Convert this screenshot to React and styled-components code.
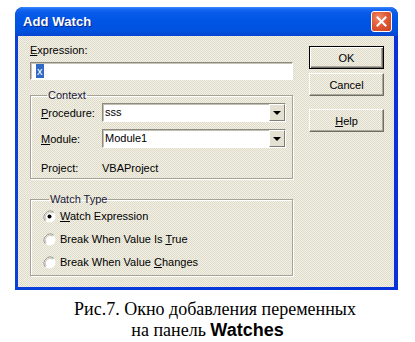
import React from "react";
import styled, { createGlobalStyle } from "styled-components";

const GlobalStyle = createGlobalStyle`
  html, body { margin: 0; padding: 0; background: #fff; }
  body { font-family: "Liberation Sans", Arial, sans-serif; font-size: 11px; color: #000; }
`;

const Page = styled.div`
  width: 415px;
  height: 342px;
  display: flex;
  flex-direction: column;
  padding: 7px 0 0 15px;
  box-sizing: border-box;
  overflow: hidden;
`;

const Window = styled.div`
  width: 383px;
  height: 283px;
  flex: none;
  display: flex;
  flex-direction: column;
  border-radius: 8px 8px 0 0;
  background: linear-gradient(90deg, #0a3fd8 0, #0831d9 100%);
  box-sizing: border-box;
  overflow: hidden;
`;

const TitleBar = styled.div`
  height: 29px;
  flex: none;
  display: flex;
  align-items: center;
  justify-content: space-between;
  padding: 0 6px 0 8px;
  background: linear-gradient(180deg, #3d8dff 0, #1a6af5 2px, #0a5cea 5px, #0055e5 45%, #0052df 80%, #0745cf 100%);
  border-radius: 8px 8px 0 0;
`;

const Title = styled.span`
  color: #fff;
  font-weight: bold;
  font-size: 13px;
  font-family: "Liberation Sans", Arial, sans-serif;
  text-shadow: 1px 1px 0 #0b2a8c;
  letter-spacing: 0.1px;
`;

const CloseButton = styled.div`
  width: 19px;
  height: 19px;
  border: 1px solid #fff;
  border-radius: 3px;
  background: radial-gradient(circle at 35% 30%, #f08a6a 0, #e05a36 45%, #c9401f 100%);
  display: flex;
  align-items: center;
  justify-content: center;
`;

const Body = styled.div`
  flex: 1;
  margin: 0 4px 3px 3px;
  display: flex;
  gap: 16px;
  padding: 8px 0 0 12px;
  box-sizing: border-box;
  background: repeating-conic-gradient(#f3f1e6 0 25%, #dedbca 0 50%) 0 0 / 2px 2px;
`;

const LeftColumn = styled.div`
  width: 263px;
  display: flex;
  flex-direction: column;
`;

const Label = styled.div`
  height: 13px;
  line-height: 13px;
  white-space: nowrap;
`;

const TextBox = styled.div`
  margin-top: 5px;
  height: 18px;
  box-sizing: border-box;
  background: #fff;
  border-style: solid;
  border-width: 1px;
  border-color: #8d8b80 #fff #fff #8d8b80;
  box-shadow: inset 1px 1px 0 #c7c4b6;
  display: flex;
  align-items: center;
  padding-left: 5px;
`;

const Selected = styled.span`
  background: #316ac5;
  color: #fff;
  height: 14px;
  line-height: 14px;
  padding: 0 1px;
`;

const Group = styled.fieldset`
  margin: ${(p) => p.$top}px 0 0 0;
  padding: ${(p) => p.$pad};
  min-inline-size: 0;
  border: 1px solid #a5a397;
  box-shadow: 1px 1px 0 #fff, inset 1px 1px 0 #fff;
  display: flex;
  flex-direction: column;
`;

const Legend = styled.legend`
  padding: 0 1px;
  margin-left: 6px;
  line-height: 13px;
  height: 13px;
  color: #1a1838;
`;

const FieldRow = styled.div`
  display: grid;
  grid-template-columns: 61px 184px;
  align-items: center;
  height: 19px;
  margin-top: ${(p) => p.$gap || 0}px;
`;

const Combo = styled.div`
  height: 19px;
  box-sizing: border-box;
  background: #fff;
  border-style: solid;
  border-width: 1px;
  border-color: #8d8b80 #fff #fff #8d8b80;
  box-shadow: inset 1px 1px 0 #c2bfb2;
  display: flex;
  align-items: stretch;
`;

const ComboText = styled.span`
  flex: 1;
  padding-left: 2px;
  line-height: 17px;
`;

const DropButton = styled.span`
  width: 16px;
  box-sizing: border-box;
  background: #e4e1d3;
  border-style: solid;
  border-width: 1px;
  border-color: #fff #807e74 #807e74 #fff;
  display: flex;
  align-items: center;
  justify-content: center;
`;

const Arrow = styled.span`
  width: 0;
  height: 0;
  border-left: 4px solid transparent;
  border-right: 4px solid transparent;
  border-top: 4px solid #000;
`;

const RadioRow = styled.label`
  display: flex;
  align-items: center;
  gap: 4px;
  height: 20px;
  margin-top: ${(p) => p.$gap || 0}px;
  white-space: nowrap;
`;

const RightColumn = styled.div`
  width: 75px;
  display: flex;
  flex-direction: column;
  padding-top: 2px;
`;

const Button = styled.div`
  height: 23px;
  box-sizing: border-box;
  margin-top: ${(p) => p.$gap || 0}px;
  display: flex;
  align-items: center;
  justify-content: center;
  border-style: solid;
  border-width: 1px;
  border-color: ${(p) => (p.$default ? "#000" : "#fff #6f6e66 #6f6e66 #fff")};
  box-shadow: ${(p) =>
    p.$default
      ? "inset 1px 1px 0 #fff, inset -1px -1px 0 #6f6e66, inset -2px -2px 0 #aca899"
      : "inset -1px -1px 0 #aca899"};
  color: #000;
`;

const Caption = styled.div`
  margin: 9px 0 0 -15px;
  width: 415px;
  text-align: center;
  text-indent: 15px;
  font-family: "Liberation Serif", "Times New Roman", serif;
  font-size: 18px;
  line-height: 21px;
  color: #000;
`;

const BoldSans = styled.span`
  font-family: "Liberation Sans", Arial, sans-serif;
  font-weight: bold;
`;

function Radio({ checked }) {
  return (
    <svg width="13" height="13" viewBox="0 0 13 13">
      <circle cx="6.5" cy="6.5" r="6" fill="#fff" />
      <path d="M2.3 10.7 A6 6 0 0 1 10.7 2.3" fill="none" stroke="#8e8b7f" strokeWidth="1" />
      <path d="M3.1 9.9 A4.9 4.9 0 0 1 9.9 3.1" fill="none" stroke="#c4c1b3" strokeWidth="1" />
      {checked && <circle cx="6.5" cy="6.5" r="2" fill="#000" />}
    </svg>
  );
}

export default function App() {
  return (
    <>
      <GlobalStyle />
      <Page>
        <Window>
          <TitleBar>
            <Title>Add Watch</Title>
            <CloseButton>
              <svg width="11" height="11" viewBox="0 0 11 11">
                <path d="M1.5 1.5 L9.5 9.5 M9.5 1.5 L1.5 9.5" stroke="#fff" strokeWidth="2" strokeLinecap="square" />
              </svg>
            </CloseButton>
          </TitleBar>
          <Body>
            <LeftColumn>
              <Label>
                <u>E</u>xpression:
              </Label>
              <TextBox>
                <Selected>x</Selected>
              </TextBox>
              <Group $top={9} $pad="1px 6px 1px 10px">
                <Legend>Context</Legend>
                <FieldRow>
                  <span>
                    <u>P</u>rocedure:
                  </span>
                  <Combo>
                    <ComboText>sss</ComboText>
                    <DropButton>
                      <Arrow />
                    </DropButton>
                  </Combo>
                </FieldRow>
                <FieldRow $gap={7}>
                  <span>
                    <u>M</u>odule:
                  </span>
                  <Combo>
                    <ComboText>Module1</ComboText>
                    <DropButton>
                      <Arrow />
                    </DropButton>
                  </Combo>
                </FieldRow>
                <FieldRow $gap={10}>
                  <span>Project:</span>
                  <span>VBAProject</span>
                </FieldRow>
              </Group>
              <Group $top={14} $pad="0 6px 3px 12px">
                <Legend>Watch Type</Legend>
                <RadioRow>
                  <Radio checked />
                  <span>
                    <u>W</u>atch Expression
                  </span>
                </RadioRow>
                <RadioRow $gap={3}>
                  <Radio />
                  <span>
                    Break When Value Is <u>T</u>rue
                  </span>
                </RadioRow>
                <RadioRow $gap={3}>
                  <Radio />
                  <span>
                    Break When Value <u>C</u>hanges
                  </span>
                </RadioRow>
              </Group>
            </LeftColumn>
            <RightColumn>
              <Button $default>OK</Button>
              <Button $gap={4}>Cancel</Button>
              <Button $gap={13}>
                <span>
                  <u>H</u>elp
                </span>
              </Button>
            </RightColumn>
          </Body>
        </Window>
        <Caption>
          Рис.7. Окно добавления переменных
          <br />
          на панель <BoldSans>Watches</BoldSans>
        </Caption>
      </Page>
    </>
  );
}
